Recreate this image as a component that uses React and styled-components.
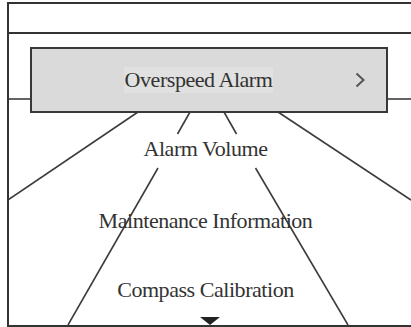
import React from "react";
import styled, { createGlobalStyle } from "styled-components";

const Global = createGlobalStyle`
  html, body { margin: 0; padding: 0; background: #fff; }
  body { font-family: "Liberation Serif", "Times New Roman", serif; }
`;

const Frame = styled.div`
  position: relative;
  box-sizing: border-box;
  margin: 2px 0 0 7px;
  width: 404px;
  height: 325px;
  border-left: 2px solid #333;
  border-top: 2px solid #333;
  border-bottom: 2px solid #333;
  display: flex;
  flex-direction: column;
`;

const Header = styled.div`
  height: 28px;
  border-bottom: 2px solid #333;
  flex: none;
`;

const Lines = styled.svg`
  position: absolute;
  inset: 0;
  width: 100%;
  height: 100%;
  pointer-events: none;
`;

const Content = styled.div`
  position: relative;
  z-index: 1;
  flex: 1;
  display: flex;
  flex-direction: column;
`;

const SelectedBox = styled.div`
  box-sizing: border-box;
  margin: 13px 0 0 21px;
  width: 358px;
  height: 66px;
  border: 2px solid #383838;
  background: #d9dad9;
  display: flex;
  align-items: center;
  padding: 0 21px 0 10px;
`;

const SelectedLabel = styled.div`
  flex: 1;
  text-align: center;
`;

const Highlight = styled.span`
  display: inline-block;
  background: #e0e1e0;
  color: #333;
  font-size: 22px;
  letter-spacing: -0.45px;
  line-height: 26px;
  padding: 0 1px;
`;

const Chevron = styled.svg`
  width: 10px;
  height: 16px;
  flex: none;
`;

const List = styled.div`
  display: flex;
  flex-direction: column;
  padding-right: 9px;
  flex: 1;
`;

const Item = styled.div`
  height: ${(p) => p.$h}px;
  display: flex;
  align-items: center;
  justify-content: center;
  color: #333;
  font-size: 22px;
  letter-spacing: -0.45px;
  line-height: 24px;
`;

const LastItem = styled.div`
  flex: 1;
  display: flex;
  flex-direction: column;
  align-items: center;
  padding-top: 21px;
  color: #333;
  font-size: 22px;
  letter-spacing: -0.45px;
  line-height: 24px;
`;

const Triangle = styled.div`
  margin-top: auto;
  margin-left: 9px;
  width: 0;
  height: 0;
  border-left: 10px solid transparent;
  border-right: 10px solid transparent;
  border-top: 8px solid #222;
`;

export default function App() {
  const stroke = "#3c3c3c";
  return (
    <>
      <Global />
      <Frame>
        <Lines viewBox="9 4 402 321" preserveAspectRatio="none">
          <g stroke={stroke} strokeWidth="1.6" fill="none">
            <line x1="9" y1="99" x2="31" y2="99" />
            <line x1="387" y1="99" x2="411" y2="99" />
            <line x1="138" y1="112" x2="8" y2="200" />
            <line x1="190" y1="112" x2="177.5" y2="134" />
            <line x1="158" y1="168" x2="68" y2="325" />
            <line x1="224" y1="112" x2="236.5" y2="134" />
            <line x1="255.5" y1="168" x2="348" y2="325" />
            <line x1="278" y1="112" x2="411" y2="200" />
          </g>
        </Lines>
        <Header />
        <Content>
          <SelectedBox>
            <SelectedLabel>
              <Highlight>Overspeed Alarm</Highlight>
            </SelectedLabel>
            <Chevron viewBox="0 0 10 16">
              <path d="M1.5 1.5 L8.5 8 L1.5 14.5" stroke="#555" strokeWidth="2" fill="none" />
            </Chevron>
          </SelectedBox>
          <List>
            <Item $h={72}>Alarm Volume</Item>
            <Item $h={72}>Maintenance Information</Item>
            <LastItem>
              Compass Calibration
              <Triangle />
            </LastItem>
          </List>
        </Content>
      </Frame>
    </>
  );
}
